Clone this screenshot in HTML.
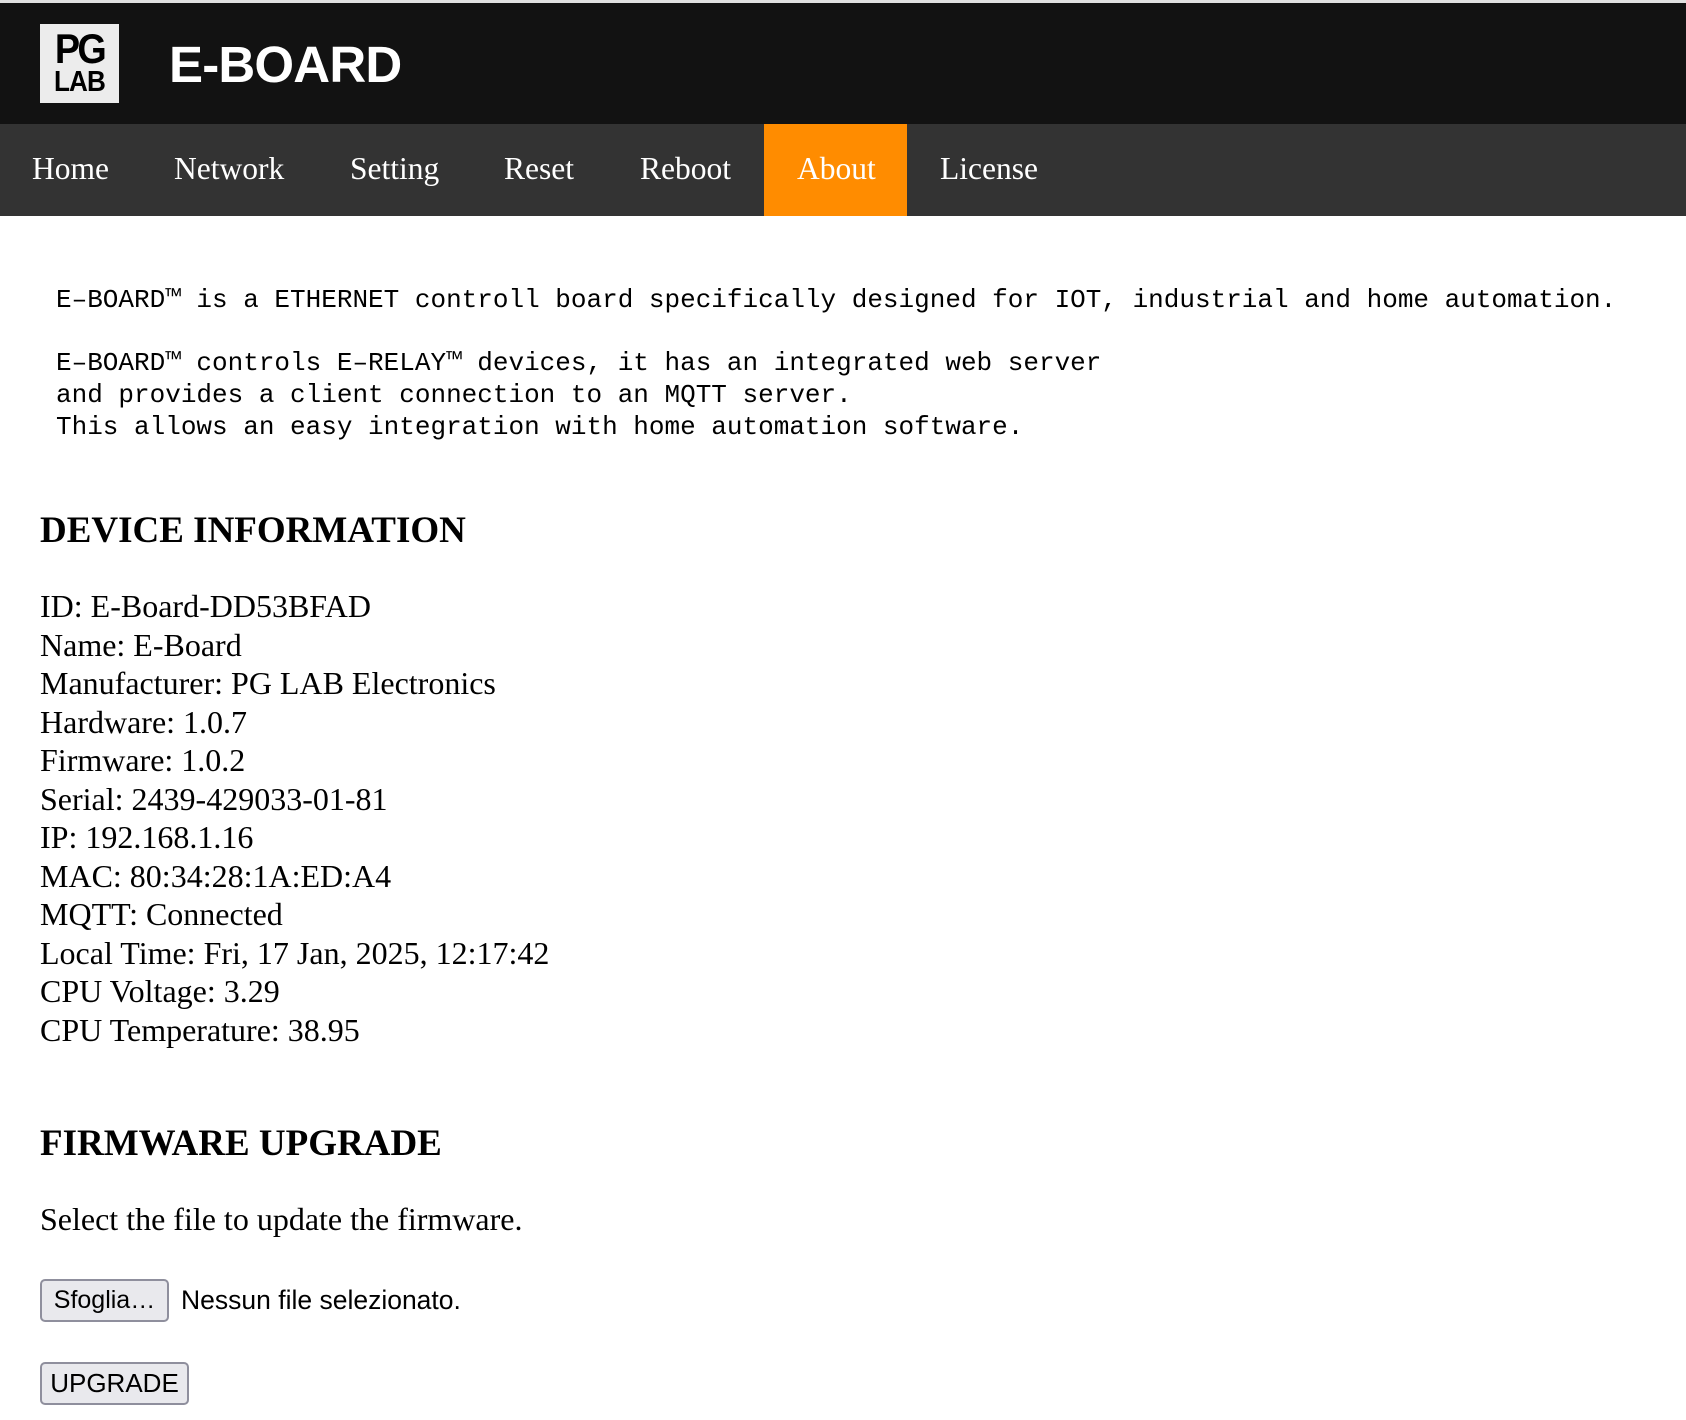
<!DOCTYPE html>
<html><head><meta charset="utf-8"><style>
html,body{margin:0;padding:0;background:#fff;width:1686px;height:1420px;overflow:hidden;position:relative}
.a{position:absolute;white-space:pre;line-height:1}
#top{position:absolute;left:0;top:0;width:1686px;height:3px;background:#e0e0e0}
#hdr{position:absolute;left:0;top:3px;width:1686px;height:121px;background:#121212}
#nav{position:absolute;left:0;top:124px;width:1686px;height:92px;background:#333}
#logo{position:absolute;left:40px;top:24px;width:79px;height:79px;background:#ececec;font-family:"Liberation Sans",sans-serif;font-weight:bold;color:#000;text-align:center}
.nv{position:absolute;top:123px;height:92px;line-height:92px;font-family:"Liberation Serif",serif;font-size:31.5px;color:#fff}
.mono{font-family:"Liberation Mono",monospace;font-size:26px;color:#000}
.ser{font-family:"Liberation Serif",serif;font-size:32px;color:#000}
h2{position:absolute;margin:0;font-family:"Liberation Serif",serif;font-size:37px;font-weight:bold;line-height:1;white-space:pre}
.btn{position:absolute;box-sizing:border-box;border:2px solid #8f8f9d;border-radius:5px;background:#e9e9ed;font-family:"Liberation Sans",sans-serif;font-size:25px;color:#000;text-align:center}
</style></head><body>
<div id="top"></div><div id="hdr"></div><div id="nav"></div>
<div id="logo"><div style="position:absolute;left:0;width:79px;top:4px;font-size:42px;letter-spacing:-3px;line-height:1;transform:scaleX(0.9)">PG</div><div style="position:absolute;left:0;width:79px;top:44px;font-size:29px;letter-spacing:-1px;line-height:1;transform:scaleX(0.9)">LAB</div></div>
<div class="a" style="left:169px;top:39px;font-family:'Liberation Sans',sans-serif;font-weight:bold;font-size:51px;color:#fff;letter-spacing:-0.8px">E-BOARD</div>
<div style="position:absolute;left:764px;top:124px;width:143px;height:92px;background:#ff8c00"></div>
<div class="nv" style="left:32px">Home</div>
<div class="nv" style="left:174px">Network</div>
<div class="nv" style="left:350px">Setting</div>
<div class="nv" style="left:504px">Reset</div>
<div class="nv" style="left:640px">Reboot</div>
<div class="nv" style="left:797px">About</div>
<div class="nv" style="left:940px">License</div>
<div class="a mono" style="left:56px;top:287px">E‒BOARD™ is a ETHERNET controll board specifically designed for IOT, industrial and home automation.</div>
<div class="a mono" style="left:56px;top:350px">E‒BOARD™ controls E‒RELAY™ devices, it has an integrated web server</div>
<div class="a mono" style="left:56px;top:382px">and provides a client connection to an MQTT server.</div>
<div class="a mono" style="left:56px;top:414px">This allows an easy integration with home automation software.</div>
<h2 style="left:40px;top:512px">DEVICE INFORMATION</h2>
<div class="a ser" style="left:40px;top:587px;line-height:38.5px">ID: E-Board-DD53BFAD
Name: E-Board
Manufacturer: PG LAB Electronics
Hardware: 1.0.7
Firmware: 1.0.2
Serial: 2439-429033-01-81
IP: 192.168.1.16
MAC: 80:34:28:1A:ED:A4
MQTT: Connected
Local Time: Fri, 17 Jan, 2025, 12:17:42
CPU Voltage: 3.29
CPU Temperature: 38.95</div>
<h2 style="left:40px;top:1125px">FIRMWARE UPGRADE</h2>
<div class="a ser" style="left:40px;top:1203px">Select the file to update the firmware.</div>
<div class="btn" style="left:40px;top:1279px;width:129px;height:43px;line-height:39px">Sfoglia…</div>
<div class="a" style="left:181px;top:1287px;font-family:'Liberation Sans',sans-serif;font-size:26.5px">Nessun file selezionato.</div>
<div class="btn" style="left:40px;top:1362px;width:149px;height:43px;line-height:39px;font-size:26px">UPGRADE</div>
</body></html>
